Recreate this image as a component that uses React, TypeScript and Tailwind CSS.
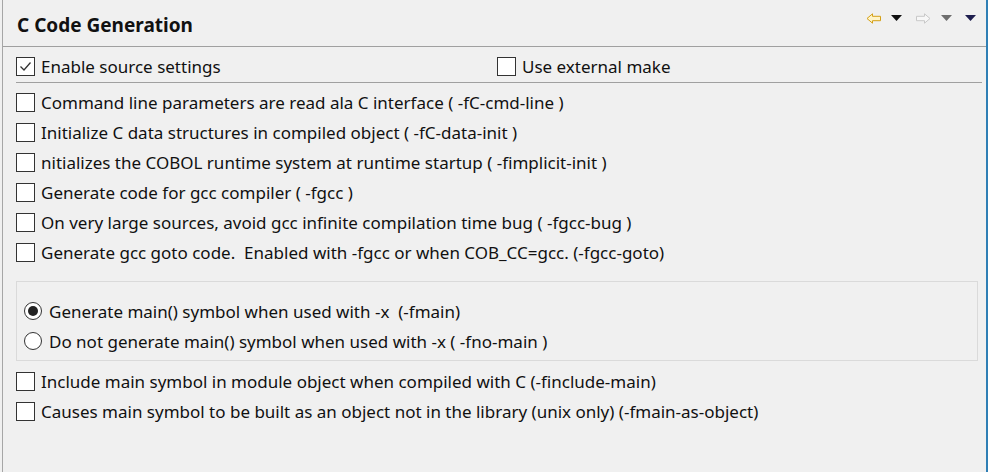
import React from 'react';

const font = { fontFamily: '"Noto Sans", "Open Sans", sans-serif' };

function Box({ checked }: { checked?: boolean }) {
  return (
    <span className="flex h-[19px] w-[19px] shrink-0 items-center justify-center border border-[#333333] bg-white">
      {checked && (
        <svg width="15" height="15" viewBox="0 0 15 15">
          <path d="M2.5 7.5 L6 11 L12.5 3.5" fill="none" stroke="#333333" strokeWidth="1.3" />
        </svg>
      )}
    </span>
  );
}

function Check({ label, checked }: { label: string; checked?: boolean }) {
  return (
    <div className="flex h-[30px] items-center gap-[6px] text-[17px] text-[#111111]">
      <Box checked={checked} />
      <span className="whitespace-pre leading-none">{label}</span>
    </div>
  );
}

function Radio({ label, checked }: { label: string; checked?: boolean }) {
  return (
    <div className="flex h-[30px] items-center gap-[7px] text-[17px] text-[#111111]">
      <span className="flex h-[18px] w-[18px] shrink-0 items-center justify-center rounded-full border border-[#333333] bg-white">
        {checked && <span className="h-[10px] w-[10px] rounded-full bg-[#222222]" />}
      </span>
      <span className="whitespace-pre leading-none">{label}</span>
    </div>
  );
}

function Tri({ color }: { color: string }) {
  return (
    <svg width="11" height="6" viewBox="0 0 11 6">
      <path d="M0 0 H11 L5.5 6 Z" fill={color} />
    </svg>
  );
}

function Arrow({ dir, stroke, fill }: { dir: 'left' | 'right'; stroke: string; fill: string }) {
  const d = 'M1 5.5 L6.5 0.8 V3.3 H14.5 V7.7 H6.5 V10.2 Z';
  return (
    <svg width="16" height="11" viewBox="0 0 16 11" className={dir === 'right' ? 'scale-x-[-1]' : ''}>
      <path d={d} fill={fill} stroke={stroke} strokeWidth="1" strokeLinejoin="round" />
    </svg>
  );
}

export default function App() {
  return (
    <div className="flex h-[472px] w-[988px] bg-[#f0f0f0]" style={font}>
      <div className="ml-[2px] flex flex-1 flex-col border-l border-[#a6a6a6]">
        <div className="flex h-[47px] shrink-0 items-center border-b border-[#a0a0a0] pl-[14px] pr-[10px]">
          <h1 className="pt-[4px] text-[19px] font-bold text-[#111111]">C Code Generation</h1>
          <div className="ml-auto flex items-center pb-[10px]">
            <Arrow dir="left" stroke="#d4a017" fill="#fff4c8" />
            <span className="ml-[9px]"><Tri color="#111111" /></span>
            <span className="ml-[13px]"><Arrow dir="right" stroke="#c8c8c8" fill="#f7f7f7" /></span>
            <span className="ml-[10px]"><Tri color="#6e6e6e" /></span>
            <span className="ml-[13px]"><Tri color="#1e1e4e" /></span>
          </div>
        </div>
        <div className="flex flex-col pl-[13px] pr-[4px]">
          <div className="flex h-[36px] items-center border-b border-[#a0a0a0] pt-[3px]">
            <div className="w-[481px]">
              <Check label="Enable source settings" checked />
            </div>
            <Check label="Use external make" />
          </div>
          <div className="pt-[4px]">
            <Check label="Command line parameters are read ala C interface ( -fC-cmd-line )" />
            <Check label="Initialize C data structures in compiled object ( -fC-data-init )" />
            <Check label="nitializes the COBOL runtime system at runtime startup ( -fimplicit-init )" />
            <Check label="Generate code for gcc compiler ( -fgcc )" />
            <Check label="On very large sources, avoid gcc infinite compilation time bug ( -fgcc-bug )" />
            <Check label="Generate gcc goto code.  Enabled with -fgcc or when COB_CC=gcc. (-fgcc-goto)" />
          </div>
          <div className="mt-[14px] mr-[4px] flex flex-col border border-[#dadada] pb-[4px] pl-[7px] pt-[14px]">
            <Radio label="Generate main() symbol when used with -x  (-fmain)" checked />
            <Radio label="Do not generate main() symbol when used with -x ( -fno-main )" />
          </div>
          <div className="pt-[5px]">
            <Check label="Include main symbol in module object when compiled with C (-finclude-main)" />
            <Check label="Causes main symbol to be built as an object not in the library (unix only) (-fmain-as-object)" />
          </div>
        </div>
      </div>
      <div className="w-[2px] shrink-0 bg-[#2f7fb5]" />
    </div>
  );
}
